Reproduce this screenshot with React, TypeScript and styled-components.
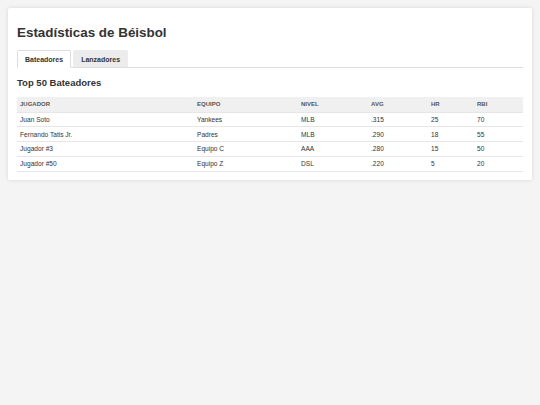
import React from "react";
import styled, { createGlobalStyle } from "styled-components";

const Global = createGlobalStyle`
  *, *::before, *::after { box-sizing: border-box; }
  html, body { margin: 0; padding: 0; background: #f4f4f4; }
  body { font-family: "Liberation Sans", Arial, sans-serif; color: #333; }
`;

const Page = styled.div`
  padding: 8px;
`;

const Card = styled.div`
  background: #fff;
  padding: 17px 9px 8px;
  box-shadow: 0 0 4px rgba(0, 0, 0, 0.12);
  border-radius: 2px;
`;

const Title = styled.h1`
  margin: 0;
  font-size: 13.4px;
  line-height: 16px;
  font-weight: bold;
  color: #333;
`;

const TabBar = styled.div`
  display: flex;
  gap: 2px;
  margin-top: 9px;
  border-bottom: 1px solid #ddd;
`;

const Tab = styled.button<{ $active?: boolean }>`
  font-family: "Liberation Sans", Arial, sans-serif;
  font-size: 7px;
  font-weight: bold;
  color: #333;
  height: 18px;
  padding: 0 7px;
  margin: 0 0 -1px;
  border: 1px solid ${(p) => (p.$active ? "#ddd" : "#ececec")};
  border-bottom: 1px solid ${(p) => (p.$active ? "#fff" : "#ddd")};
  border-radius: 2px 2px 0 0;
  background: ${(p) => (p.$active ? "#fff" : "#ececec")};
  cursor: pointer;
`;

const Subtitle = styled.h2`
  margin: 9px 0 0;
  font-size: 9.5px;
  line-height: 11px;
  font-weight: bold;
  color: #333;
`;

const Table = styled.table`
  width: 100%;
  margin-top: 9px;
  border-collapse: collapse;
  table-layout: fixed;
`;

const Th = styled.th<{ $w: number }>`
  width: ${(p) => p.$w}px;
  background: #f0f0f0;
  text-align: left;
  font-size: 6px;
  font-weight: bold;
  color: #555;
  text-transform: uppercase;
  height: 15px;
  padding: 0 3px;
  border-bottom: 1px solid #e6e6e6;
`;

const Td = styled.td`
  font-size: 6.6px;
  color: #333;
  height: 14.75px;
  padding: 0 3px;
  border-bottom: 1px solid #e6e6e6;
`;

const cols: [string, number][] = [
  ["Jugador", 177],
  ["Equipo", 104],
  ["Nivel", 70],
  ["AVG", 60],
  ["HR", 46],
  ["RBI", 49],
];

const rows = [
  ["Juan Soto", "Yankees", "MLB", ".315", "25", "70"],
  ["Fernando Tatis Jr.", "Padres", "MLB", ".290", "18", "55"],
  ["Jugador #3", "Equipo C", "AAA", ".280", "15", "50"],
  ["Jugador #50", "Equipo Z", "DSL", ".220", "5", "20"],
];

export default function App() {
  return (
    <Page>
      <Global />
      <Card>
        <Title>Estadísticas de Béisbol</Title>
        <TabBar>
          <Tab $active>Bateadores</Tab>
          <Tab>Lanzadores</Tab>
        </TabBar>
        <Subtitle>Top 50 Bateadores</Subtitle>
        <Table>
          <thead>
            <tr>
              {cols.map(([c, w]) => (
                <Th key={c} $w={w}>
                  {c}
                </Th>
              ))}
            </tr>
          </thead>
          <tbody>
            {rows.map((r) => (
              <tr key={r[0]}>
                {r.map((v, i) => (
                  <Td key={i}>{v}</Td>
                ))}
              </tr>
            ))}
          </tbody>
        </Table>
      </Card>
    </Page>
  );
}
